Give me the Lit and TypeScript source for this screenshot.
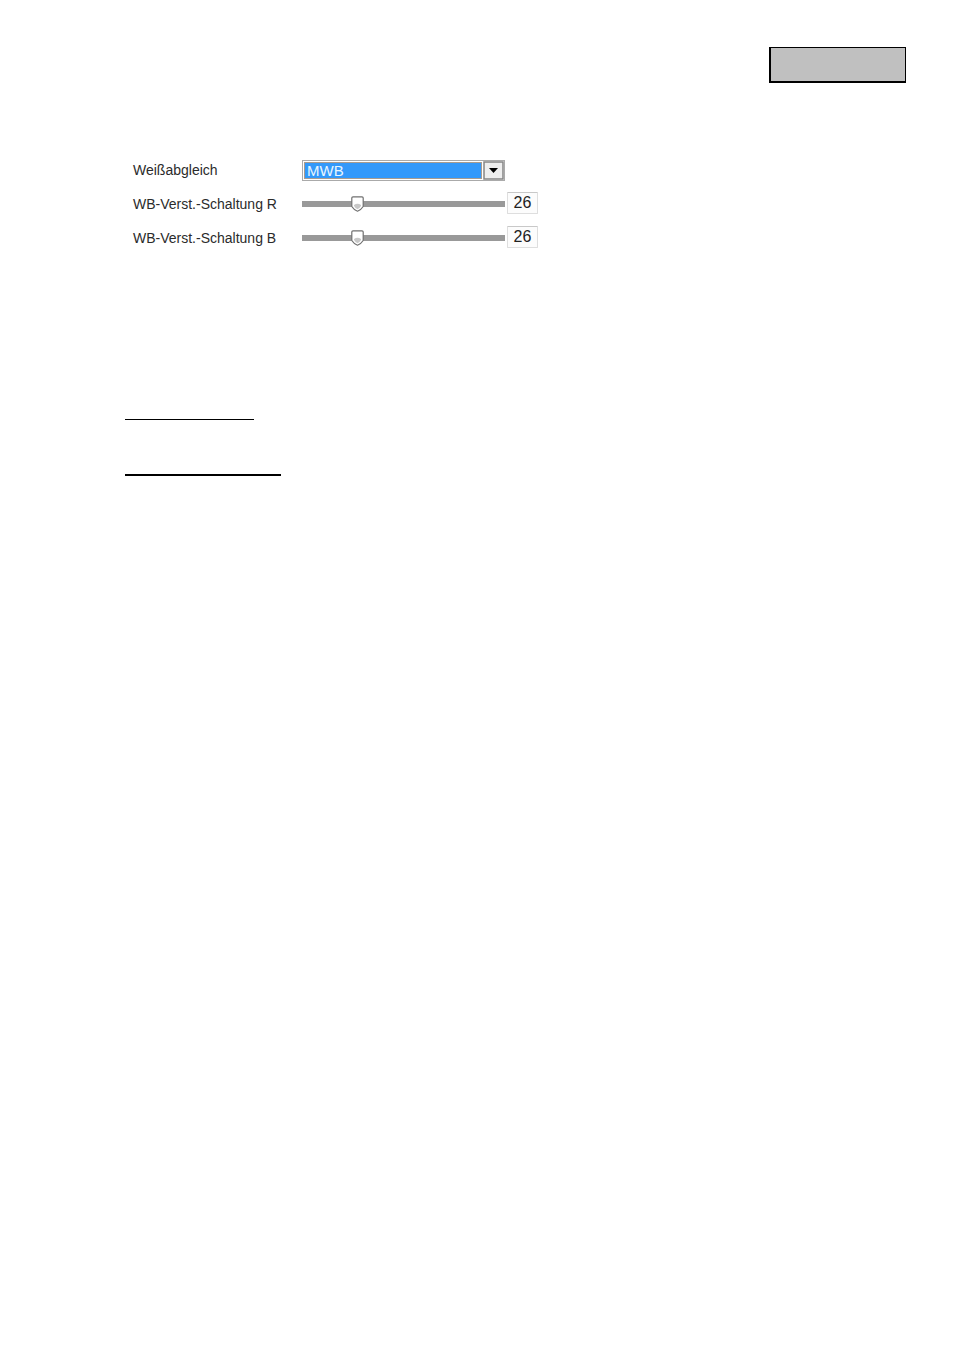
import { LitElement, html, css } from "lit";
import { customElement, property, state } from "lit/decorators.js";

@customElement("gain-slider")
class GainSlider extends LitElement {
  @property() label = "";
  @property({ type: Number }) value = 0;

  static styles = css`
    :host {
      display: grid;
      grid-template-columns: 169px 203px 31px;
      align-items: center;
      height: 24px;
    }
    .label {
      font-size: 14px;
      line-height: 20px;
      white-space: nowrap;
    }
    .slider {
      appearance: none;
      width: 100%;
      height: 16px;
      margin: 0;
      background: transparent;
    }
    .slider::-webkit-slider-runnable-track {
      height: 6px;
      background: #999;
    }
    .slider::-webkit-slider-thumb {
      appearance: none;
      width: 13px;
      height: 16px;
      margin-top: -5px;
      background: url("data:image/svg+xml,%3Csvg xmlns='http://www.w3.org/2000/svg' viewBox='0 0 13 16'%3E%3Cpath d='M2 .8h9q1.200 0 1.200 1.200v8.500Q10 14 6.500 15.200 3 14 .8 10.500V2Q.8.8 2 .8Z' fill='%23fff' stroke='%23707070' stroke-width='1.200'/%3E%3Cpath d='M3 9q3.500-2.500 7 0v1Q8.500 12.500 6.500 13.200 4.500 12.500 3 10Z' fill='%23c8c8c8'/%3E%3C/svg%3E")
        center / 100% 100% no-repeat;
    }
    .value {
      box-sizing: border-box;
      align-self: start;
      width: 31px;
      height: 22px;
      margin: 0 0 0 2px;
      padding: 0;
      border: 1px solid #dedede;
      border-top-color: #c8c8c8;
      border-radius: 1px;
      background: #fcfcfc;
      color: #222;
      font: 16px/20px "Liberation Sans", Arial, sans-serif;
      text-align: center;
    }
  `;

  private update_(e: Event) {
    this.value = Number((e.target as HTMLInputElement).value);
  }

  render() {
    return html`
      <label class="label" for="range">${this.label}</label>
      <input class="slider" id="range" type="range" min="0" max="100"
        .value=${String(this.value)} @input=${this.update_} />
      <input class="value" type="text" aria-label=${this.label}
        .value=${String(this.value)} @change=${this.update_} />
    `;
  }
}

@customElement("app-root")
class AppRoot extends LitElement {
  @state() private mode = "MWB";

  static styles = css`
    :host {
      display: block;
      min-height: 100vh;
      background: #fff;
      color: #2b2b2b;
      font-family: "Liberation Sans", Arial, sans-serif;
    }
    .header {
      display: flex;
      justify-content: flex-end;
      padding: 47px 48px 0;
    }
    .tag {
      box-sizing: border-box;
      width: 137px;
      height: 36px;
      border: solid #000;
      border-width: 1px 1px 2px 2px;
      background: #c0c0c0;
    }
    .settings {
      display: grid;
      gap: 10px;
      padding: 75px 48px 0 133px;
    }
    .row {
      display: grid;
      grid-template-columns: 169px 203px;
      align-items: center;
      height: 24px;
    }
    .label {
      font-size: 14px;
      line-height: 20px;
    }
    .select {
      appearance: none;
      box-sizing: border-box;
      width: 100%;
      height: 21px;
      margin: 0;
      padding: 0 24px 0 4px;
      border: 1px solid #aaa;
      border-radius: 0;
      background:
        url("data:image/svg+xml,%3Csvg xmlns='http://www.w3.org/2000/svg' viewBox='0 0 21 19'%3E%3Cpath d='M1 1h19v17H1Z' fill='%23eee' stroke='%23858585' stroke-width='1.500'/%3E%3Cpath d='M6 7h9l-4.500 5Z' fill='%23000'/%3E%3C/svg%3E")
          right center / 21px 19px no-repeat,
        linear-gradient(#3399fa, #3399fa) 2px 2px / calc(100% - 25px) calc(100% - 4px) no-repeat,
        linear-gradient(#a89c90, #a89c90) 1px 1px / calc(100% - 23px) calc(100% - 2px) no-repeat,
        #fff;
      color: #e8f6ff;
      font: 15px/19px "Liberation Sans", Arial, sans-serif;
    }
    .rules {
      display: grid;
      justify-items: start;
      gap: 54px;
      padding: 169px 48px 0 125px;
    }
    .rule {
      width: 129px;
      height: 1px;
      margin: 0;
      border: 0;
      background: #000;
    }
    .rule.strong {
      width: 156px;
      height: 2px;
    }
  `;

  render() {
    return html`
      <header class="header"><div class="tag"></div></header>
      <main>
        <form class="settings">
          <div class="row">
            <label class="label" for="balance">Weißabgleich</label>
            <select class="select" id="balance" .value=${this.mode}
              @change=${(e: Event) => (this.mode = (e.target as HTMLSelectElement).value)}>
              <option value="MWB">MWB</option>
            </select>
          </div>
          <gain-slider label="WB-Verst.-Schaltung R" value="26"></gain-slider>
          <gain-slider label="WB-Verst.-Schaltung B" value="26"></gain-slider>
        </form>
        <div class="rules">
          <hr class="rule" />
          <hr class="rule strong" />
        </div>
      </main>
    `;
  }
}
